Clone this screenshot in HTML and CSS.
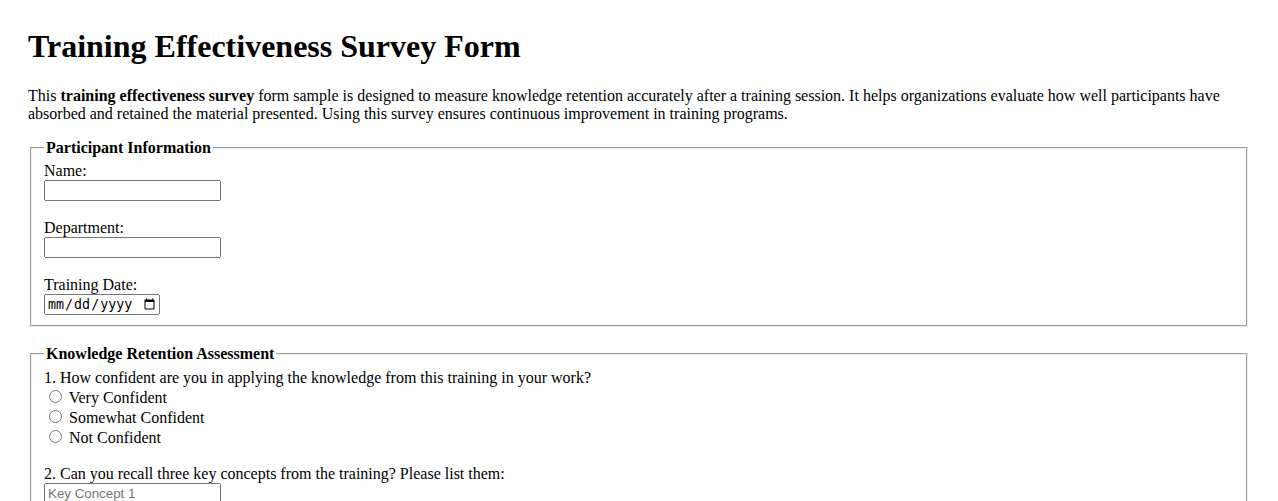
FILE: index.html
```html
<!DOCTYPE html>
<html lang="en">
<head>
<meta charset="utf-8">
<title>Training Effectiveness Survey Form</title>
<link rel="stylesheet" href="styles.css">
</head>
<body>
<h1 class="title">Training Effectiveness Survey Form</h1>
<p class="intro">This <strong>training effectiveness survey</strong> form sample is designed to measure knowledge retention accurately after a training session. It helps organizations evaluate how well participants have absorbed and retained the material presented. Using this survey ensures continuous improvement in training programs.</p>
<form class="survey">
  <fieldset class="section">
    <legend class="section-title">Participant Information</legend>
    <label for="name">Name:</label><br>
    <input class="text-field" type="text" id="name" name="name"><br><br>
    <label for="dept">Department:</label><br>
    <input class="text-field" type="text" id="dept" name="dept"><br><br>
    <label for="date">Training Date:</label><br>
    <input class="date-field" type="date" id="date" name="date">
  </fieldset>
  <br>
  <fieldset class="section">
    <legend class="section-title">Knowledge Retention Assessment</legend>
    <label>1. How confident are you in applying the knowledge from this training in your work?</label><br>
    <input type="radio" id="c1" name="conf" value="very"> <label for="c1">Very Confident</label><br>
    <input type="radio" id="c2" name="conf" value="some"> <label for="c2">Somewhat Confident</label><br>
    <input type="radio" id="c3" name="conf" value="not"> <label for="c3">Not Confident</label><br><br>
    <label>2. Can you recall three key concepts from the training? Please list them:</label><br>
    <input class="text-field" type="text" name="k1" placeholder="Key Concept 1"><br>
    <input class="text-field" type="text" name="k2" placeholder="Key Concept 2"><br>
    <input class="text-field" type="text" name="k3" placeholder="Key Concept 3">
  </fieldset>
</form>
</body>
</html>
```
FILE: styles.css
```css
body {
  margin: 7px 28px 8px;
  font-family: "Liberation Serif", "Times New Roman", serif;
  font-size: 16px;
  color: #000;
  background: #fff;
}
.title {
  font-size: 32px;
}
.section-title {
  font-weight: bold;
}
.text-field {
  box-sizing: border-box;
  width: 177px;
  height: 21px;
}
.date-field {
  box-sizing: border-box;
  width: 116px;
  height: 21px;
}
```
